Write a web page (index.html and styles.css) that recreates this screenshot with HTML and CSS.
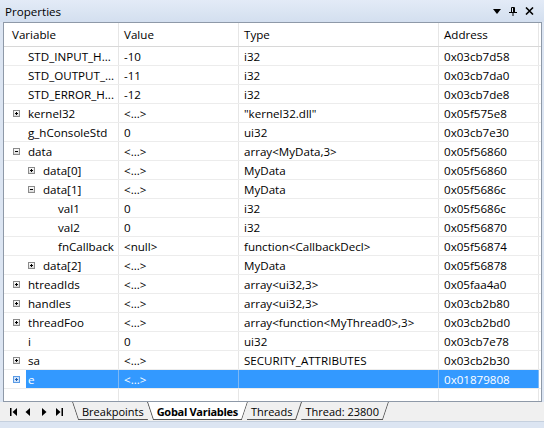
FILE: index.html
```
<!DOCTYPE html>
<html lang="en">
<head>
  <meta charset="UTF-8" />
  <title>Properties</title>
  <link rel="stylesheet" href="styles.css">
</head>
<body>
  <svg width="0" height="0" class="defs">
    <defs>
      <linearGradient id="boxfill" x1="0" y1="0" x2="0" y2="1">
        <stop offset="0" stop-color="#ffffff"/>
        <stop offset="1" stop-color="#d8d8d8"/>
      </linearGradient>
      <symbol id="plus" viewBox="0 0 7 7">
        <rect x="0.5" y="0.5" width="6" height="6" fill="url(#boxfill)" stroke="#8a8a8a"/>
        <path d="M2 3.5h3M3.5 2v3" stroke="#000" stroke-width="1"/>
      </symbol>
      <symbol id="minus" viewBox="0 0 7 7">
        <rect x="0.5" y="0.5" width="6" height="6" fill="url(#boxfill)" stroke="#8a8a8a"/>
        <path d="M2 3.5h3" stroke="#000" stroke-width="1"/>
      </symbol>
      <symbol id="plus-sel" viewBox="0 0 7 7">
        <rect x="0.5" y="0.5" width="6" height="6" fill="#cfe3fb" stroke="#5a9be6"/>
        <path d="M2 3.5h3M3.5 2v3" stroke="#1f5fb0" stroke-width="1"/>
      </symbol>
    </defs>
  </svg>

  <div class="titlebar">
    <span class="title">Properties</span>
    <div class="tools">
      <svg width="8" height="5" viewBox="0 0 8 5"><path d="M0 0h8L4 5z" fill="#000"/></svg>
      <svg width="8" height="9" viewBox="0 0 8 9"><path d="M2.5 0.5h3v5h-3zM0 5.5h8M4 6v3" fill="none" stroke="#000"/><path d="M4.5 1v4" stroke="#000"/></svg>
      <svg width="9" height="8" viewBox="0 0 9 8"><path d="M1 0.5l7 7M8 0.5l-7 7" stroke="#000" stroke-width="1.6"/></svg>
    </div>
  </div>

  <div class="panel">
    <div class="row head">
      <div class="cell var">Variable</div>
      <div class="cell">Value</div>
      <div class="cell">Type</div>
      <div class="cell">Address</div>
    </div>

    <div class="rows">
      <div class="row">
        <div class="cell var l0"><span class="exp"></span><span class="name">STD_INPUT_H...</span></div>
        <div class="cell">-10</div><div class="cell">i32</div><div class="cell">0x03cb7d58</div>
      </div>
      <div class="row">
        <div class="cell var l0"><span class="exp"></span><span class="name">STD_OUTPUT_...</span></div>
        <div class="cell">-11</div><div class="cell">i32</div><div class="cell">0x03cb7da0</div>
      </div>
      <div class="row">
        <div class="cell var l0"><span class="exp"></span><span class="name">STD_ERROR_H...</span></div>
        <div class="cell">-12</div><div class="cell">i32</div><div class="cell">0x03cb7de8</div>
      </div>
      <div class="row">
        <div class="cell var l0"><svg class="exp"><use href="#plus"/></svg><span class="name">kernel32</span></div>
        <div class="cell">&lt;...&gt;</div><div class="cell">"kernel32.dll"</div><div class="cell">0x05f575e8</div>
      </div>
      <div class="row">
        <div class="cell var l0"><span class="exp"></span><span class="name">g_hConsoleStd</span></div>
        <div class="cell">0</div><div class="cell">ui32</div><div class="cell">0x03cb7e30</div>
      </div>
      <div class="row">
        <div class="cell var l0"><svg class="exp"><use href="#minus"/></svg><span class="name">data</span></div>
        <div class="cell">&lt;...&gt;</div><div class="cell">array&lt;MyData,3&gt;</div><div class="cell">0x05f56860</div>
      </div>
      <div class="row">
        <div class="cell var l1"><svg class="exp"><use href="#plus"/></svg><span class="name">data[0]</span></div>
        <div class="cell">&lt;...&gt;</div><div class="cell">MyData</div><div class="cell">0x05f56860</div>
      </div>
      <div class="row">
        <div class="cell var l1"><svg class="exp"><use href="#minus"/></svg><span class="name">data[1]</span></div>
        <div class="cell">&lt;...&gt;</div><div class="cell">MyData</div><div class="cell">0x05f5686c</div>
      </div>
      <div class="row">
        <div class="cell var l2"><span class="exp"></span><span class="name">val1</span></div>
        <div class="cell">0</div><div class="cell">i32</div><div class="cell">0x05f5686c</div>
      </div>
      <div class="row">
        <div class="cell var l2"><span class="exp"></span><span class="name">val2</span></div>
        <div class="cell">0</div><div class="cell">i32</div><div class="cell">0x05f56870</div>
      </div>
      <div class="row">
        <div class="cell var l2"><span class="exp"></span><span class="name">fnCallback</span></div>
        <div class="cell">&lt;null&gt;</div><div class="cell">function&lt;CallbackDecl&gt;</div><div class="cell">0x05f56874</div>
      </div>
      <div class="row">
        <div class="cell var l1"><svg class="exp"><use href="#plus"/></svg><span class="name">data[2]</span></div>
        <div class="cell">&lt;...&gt;</div><div class="cell">MyData</div><div class="cell">0x05f56878</div>
      </div>
      <div class="row">
        <div class="cell var l0"><svg class="exp"><use href="#plus"/></svg><span class="name">htreadIds</span></div>
        <div class="cell">&lt;...&gt;</div><div class="cell">array&lt;ui32,3&gt;</div><div class="cell">0x05faa4a0</div>
      </div>
      <div class="row">
        <div class="cell var l0"><svg class="exp"><use href="#plus"/></svg><span class="name">handles</span></div>
        <div class="cell">&lt;...&gt;</div><div class="cell">array&lt;ui32,3&gt;</div><div class="cell">0x03cb2b80</div>
      </div>
      <div class="row">
        <div class="cell var l0"><svg class="exp"><use href="#plus"/></svg><span class="name">threadFoo</span></div>
        <div class="cell">&lt;...&gt;</div><div class="cell">array&lt;function&lt;MyThread0&gt;,3&gt;</div><div class="cell">0x03cb2bd0</div>
      </div>
      <div class="row">
        <div class="cell var l0"><span class="exp"></span><span class="name">i</span></div>
        <div class="cell">0</div><div class="cell">ui32</div><div class="cell">0x03cb7e78</div>
      </div>
      <div class="row">
        <div class="cell var l0"><svg class="exp"><use href="#plus"/></svg><span class="name">sa</span></div>
        <div class="cell">&lt;...&gt;</div><div class="cell">SECURITY_ATTRIBUTES</div><div class="cell">0x03cb2b30</div>
      </div>
      <div class="row selected">
        <div class="cell var l0"><svg class="exp"><use href="#plus-sel"/></svg><span class="name">e</span></div>
        <div class="cell">&lt;...&gt;</div><div class="cell"></div><div class="cell">0x01879808</div>
      </div>
      <div class="row filler">
        <div class="cell var"></div><div class="cell"></div><div class="cell"></div><div class="cell"></div>
      </div>
    </div>
  </div>

  <div class="tabstrip">
    <svg class="nav" width="62" height="8" viewBox="0 0 62 8">
      <path d="M0 0h1.5v8H0zM7 0v8L2.5 4z" fill="#000"/>
      <path d="M20 0v8L15.5 4z" fill="#000"/>
      <path d="M32 0v8l4.5-4z" fill="#000"/>
      <path d="M46 0v8l4.5-4zM51.5 0H53v8h-1.5z" fill="#000"/>
    </svg>
    <div class="tabs">
      <div class="tab first">Breakpoints</div>
      <div class="tab active">Gobal Variables</div>
      <div class="tab t3">Threads</div>
      <div class="tab t4">Thread: 23800</div>
    </div>
  </div>
  <div class="footer"></div>
</body>
</html>
```
FILE: styles.css
```
* {
  box-sizing: border-box;
}
body {
  margin: 0;
  width: 544px;
  height: 428px;
  overflow: hidden;
  background-color: #dce5f2;
  font-family: "Open Sans", sans-serif;
  font-size: 11.6px;
  color: #000;
}
.defs {
  display: block;
  width: 0;
  height: 0;
}
.titlebar {
  height: 22px;
  display: flex;
  align-items: center;
  padding: 0 10px 0 5px;
  background: linear-gradient(#e3ebf7, #d3dfef);
}
.title {
  flex: 1;
}
.tools {
  display: flex;
  align-items: center;
  gap: 8px;
}
.panel {
  margin: 0 2px 0 3px;
  height: 380px;
  border: 1px solid #8e99a8;
  background-color: #fff;
  display: flex;
  flex-direction: column;
}
.row {
  display: grid;
  grid-template-columns: 115px 120px 200px 100px;
  height: 19px;
  border-bottom: 1px solid #ececec;
}
.row.head {
  height: 24px;
  border-bottom: 1px solid #d8d8d8;
}
.rows {
  flex: 1;
  display: flex;
  flex-direction: column;
}
.row.filler {
  flex: 1;
  border-bottom: none;
}
.cell {
  border-right: 1px solid #e6e6e6;
  padding-left: 5px;
  display: flex;
  align-items: center;
  white-space: nowrap;
  overflow: hidden;
}
.head .cell.var {
  padding-left: 8px;
}
.cell.var {
  padding-left: 9px;
}
.cell.l1 {
  padding-left: 24px;
}
.cell.l2 {
  padding-left: 39px;
}
.exp {
  width: 7px;
  height: 7px;
  flex: none;
}
.name {
  margin-left: 6px;
  padding-left: 2px;
  align-self: stretch;
  display: flex;
  align-items: center;
  flex: 1;
}
.selected .cell {
  background-color: #3399ff;
  color: #fff;
  border-right-color: #7db8f5;
}
.selected .cell.var {
  background-color: #fff;
}
.selected .name {
  background-color: #3399ff;
}
.tabstrip {
  height: 19px;
  background-color: #f0f0f0;
  display: flex;
  align-items: flex-start;
}
.nav {
  margin: 6px 0 0 10px;
}
.tabs {
  display: flex;
  font-size: 11px;
}
.tab {
  position: relative;
  height: 18px;
  padding: 0 10px 0 10px;
  margin-left: -7px;
  display: flex;
  align-items: center;
  background: linear-gradient(#555, #555) no-repeat 6px 100% / calc(100% - 12px) 1px, #f0f0f0;
  clip-path: polygon(0 0, 100% 0, calc(100% - 6px) 100%, 6px 100%);
}
.tab::before,
.tab::after {
  content: '';
  position: absolute;
  top: 0;
  width: 1px;
  height: 18px;
  background-color: #555;
}
.tab::before {
  left: 0;
  transform-origin: top left;
  transform: skewX(18.4deg);
}
.tab::after {
  right: 0;
  transform-origin: top right;
  transform: skewX(-18.4deg);
}
.tab.first {
  margin-left: 0;
  z-index: 1;
}
.tab.first::after {
  display: none;
}
.tab.active {
  font-weight: bold;
  letter-spacing: -0.3px;
  z-index: 5;
  background: linear-gradient(#555, #555) no-repeat 6px 100% / calc(100% - 12px) 1px, #fff;
}
.tab.t3 {
  z-index: 4;
}
.tab.t4 {
  z-index: 3;
}
.tab.t3::before,
.tab.t4::before {
  display: none;
}
.footer {
  height: 9px;
  border-top: 1px solid #c5d0de;
  background-color: #dce5f2;
}
```
